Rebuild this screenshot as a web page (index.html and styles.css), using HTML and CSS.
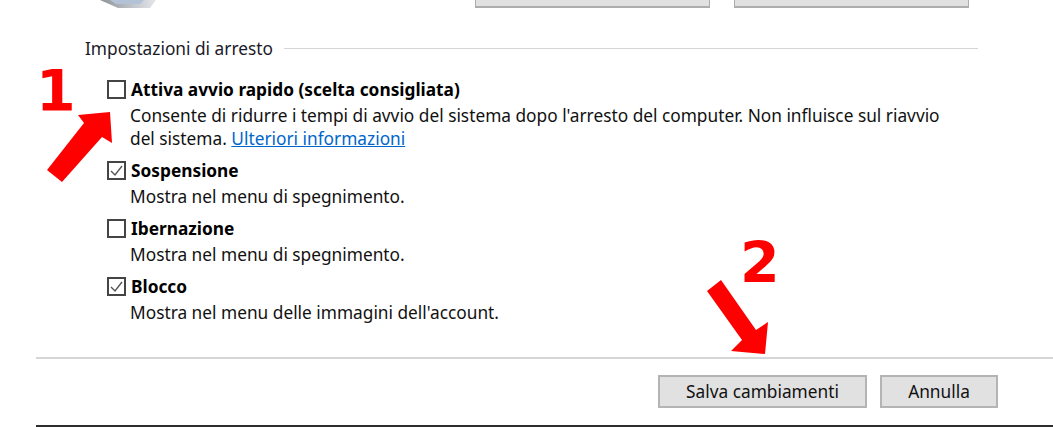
FILE: index.html
```html
<!DOCTYPE html>
<html lang="it">
<head>
<meta charset="utf-8">
<title>Impostazioni di sistema</title>
<link rel="stylesheet" href="styles.css">
</head>
<body>
<div class="page">
  <div class="top">
    <svg class="top-icon" width="60" height="8" viewBox="0 0 60 8">
      <defs>
        <linearGradient id="g1" x1="0" y1="0" x2="1" y2="0">
          <stop offset="0" stop-color="#8e9197"/>
          <stop offset="0.6" stop-color="#c3c6cc"/>
          <stop offset="1" stop-color="#e4e6ea"/>
        </linearGradient>
      </defs>
      <polygon points="0,0 56,0 50,8 18,8" fill="url(#g1)"/>
      <polygon points="10,0 44,0 40,4 16,4" fill="#b3c2d6"/>
    </svg>
    <div class="top-btn"></div>
    <div class="top-btn"></div>
  </div>

  <section class="group">
    <div class="group-title"><span>Impostazioni di arresto</span><span class="rule"></span></div>
    <ul class="options">
      <li class="option">
        <span class="box"></span>
        <span class="label">Attiva avvio rapido (scelta consigliata)</span>
        <p class="desc">Consente di ridurre i tempi di avvio del sistema dopo l'arresto del computer. Non influisce sul riavvio del sistema. <a href="#">Ulteriori informazioni</a></p>
      </li>
      <li class="option">
        <span class="box checked"><svg viewBox="0 0 19 19" width="19" height="19"><polyline points="4,10 8,14 15,5" fill="none" stroke="#555" stroke-width="1.4"/></svg></span>
        <span class="label">Sospensione</span>
        <p class="desc">Mostra nel menu di spegnimento.</p>
      </li>
      <li class="option">
        <span class="box"></span>
        <span class="label">Ibernazione</span>
        <p class="desc">Mostra nel menu di spegnimento.</p>
      </li>
      <li class="option">
        <span class="box checked"><svg viewBox="0 0 19 19" width="19" height="19"><polyline points="4,10 8,14 15,5" fill="none" stroke="#555" stroke-width="1.4"/></svg></span>
        <span class="label">Blocco</span>
        <p class="desc">Mostra nel menu delle immagini dell'account.</p>
      </li>
    </ul>
  </section>

  <footer class="footer">
    <div class="actions">
      <button class="btn btn-save">Salva cambiamenti</button>
      <button class="btn btn-cancel">Annulla</button>
    </div>
  </footer>

  <div class="annot annot-1">1</div>
  <div class="annot annot-2">2</div>
  <svg class="arrows" width="1053" height="427" viewBox="0 0 1053 427">
    <polygon points="47,170 84,123 78,115 110,112 112,143 102,137 62,182" fill="#ff0000"/>
    <polygon points="707,291 721,280 756,330 768,322 765,354 731,351 742,340" fill="#ff0000"/>
  </svg>
</div>
</body>
</html>
```

FILE: styles.css
```css
* { box-sizing: border-box; }

html, body {
  margin: 0;
  padding: 0;
  background: #ffffff;
}

body {
  font-family: "Noto Sans", "Open Sans", sans-serif;
  font-size: 17.3px;
  color: #111111;
}

.page {
  position: relative;
  width: 1053px;
  height: 427px;
  overflow: hidden;
}

/* top strip: only the bottom edge of the previous section is visible */
.top {
  display: flex;
  align-items: flex-end;
  height: 8px;
  overflow: hidden;
  padding-left: 100px;
}

.top-icon {
  display: block;
  flex: none;
  align-self: flex-start;
}

.top-btn {
  flex: none;
  width: 235px;
  height: 30px;
  background: #e1e1e1;
  border: 1px solid #adadad;
  border-bottom-width: 2px;
}

.top-btn:first-of-type { margin-left: 315px; }
.top-btn + .top-btn { margin-left: 24px; }

/* group */
.group {
  margin: 29px 75px 0 85px;
}

.group-title {
  display: flex;
  align-items: center;
  gap: 11px;
  line-height: 23px;
  color: #1a1a2a;
}

.group-title .rule {
  flex: 1;
  height: 1px;
  background: #d5d5d5;
}

.options {
  list-style: none;
  margin: 18px 0 0 0;
  padding: 0 0 0 22px;
}

.option {
  display: grid;
  grid-template-columns: 19px 1fr;
  column-gap: 5px;
  align-items: center;
}

.option + .option { margin-top: 9px; }

.box {
  width: 19px;
  height: 19px;
  border: 2px solid #444444;
  background: #ffffff;
  position: relative;
}

.box svg {
  position: absolute;
  left: -2px;
  top: -2px;
}

.label {
  font-weight: 700;
  line-height: 23px;
  color: #000000;
}

.desc {
  grid-column: 2;
  margin: 3px 0 0 -1px;
  max-width: 826px;
  line-height: 23px;
  color: #111111;
}

.desc a {
  color: #0066cc;
  text-decoration: underline;
}

/* footer */
.footer {
  margin: 33px 0 0 36px;
  border-top: 2px solid #d6d6d6;
}

.actions {
  display: flex;
  justify-content: flex-end;
  gap: 13px;
  padding: 16px 55px 17px 0;
  border-bottom: 2px solid #2e2e2e;
}

.btn {
  height: 33px;
  font: inherit;
  color: #111111;
  background: #e1e1e1;
  border: 2px solid #b4b4b4;
  border-radius: 0;
  padding: 0;
}

.btn-save { width: 209px; }
.btn-cancel { width: 118px; }

/* annotations */
.annot {
  position: absolute;
  font-family: "DejaVu Sans", sans-serif;
  font-weight: 700;
  font-size: 57px;
  line-height: 57px;
  color: #ff0000;
}

.annot-1 { left: 36px; top: 63px; }
.annot-2 { left: 740px; top: 235px; }

.arrows {
  position: absolute;
  left: 0;
  top: 0;
  pointer-events: none;
}
```
